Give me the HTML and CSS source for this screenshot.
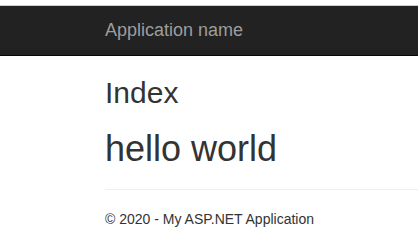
FILE: index.html
```html
<!DOCTYPE html>
<html lang="en">
<head>
    <meta charset="UTF-8">
    <meta name="viewport" content="width=device-width, initial-scale=1.0">
    <title>Index - My ASP.NET Application</title>
    <link rel="stylesheet" href="styles.css">
</head>
<body>
    <div class="navbar">
        <div class="container">
            <a class="navbar-brand" href="#">Application name</a>
        </div>
    </div>
    <div class="container body-content">
        <h2>Index</h2>
        <h1>hello world</h1>
        <hr>
        <footer>
            <p>&copy; 2020 - My ASP.NET Application</p>
        </footer>
    </div>
</body>
</html>
```

FILE: styles.css
```css
body {
    margin: 0;
    padding-top: 5px;
    font-family: "Liberation Sans", Arial, sans-serif;
    font-size: 14px;
    line-height: 1.42857143;
    color: #333;
    background-color: #fff;
}
.container {
    padding: 0 0 0 15px;
    margin-left: 90px;
}
.navbar {
    height: 51px;
    box-sizing: border-box;
    background-color: #222;
    border-top: 1px solid #d0d0d0;
    border-bottom: 1px solid #080808;
}
.navbar-brand {
    display: block;
    height: 49px;
    padding: 14px 0;
    box-sizing: border-box;
    font-size: 18px;
    line-height: 20px;
    color: #9d9d9d;
    text-decoration: none;
}
h1, h2 {
    font-weight: 500;
    line-height: 1.1;
    color: inherit;
    margin-top: 20px;
    margin-bottom: 10px;
}
h2 {
    font-size: 30px;
}
h1 {
    font-size: 36px;
}
hr {
    margin: 20px 0 19px;
    border: 0;
    border-top: 1px solid #eee;
}
footer p {
    margin: 0 0 10px;
}
```
